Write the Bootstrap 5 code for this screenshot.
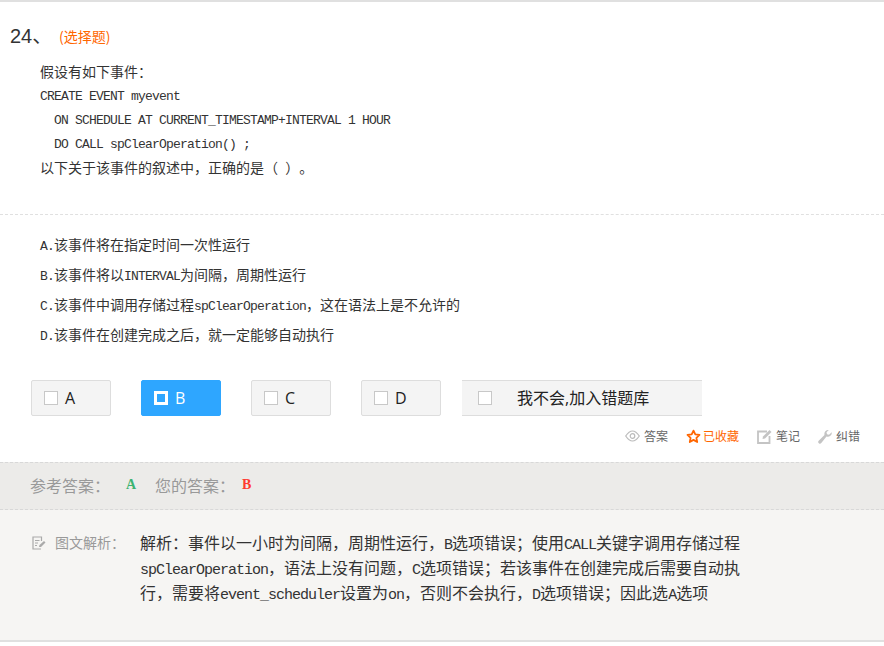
<!DOCTYPE html>
<html lang="zh-CN">
<head>
  <meta charset="UTF-8">
  <meta name="viewport" content="width=device-width, initial-scale=1">
  <title>选择题</title>
  <link href="https://cdn.jsdelivr.net/npm/bootstrap@5.3.2/dist/css/bootstrap.min.css" rel="stylesheet">
  <style>
    body {
      background: #fff;
      color: #333;
      font-family: "Noto Sans CJK SC", "Liberation Sans", sans-serif;
      font-size: 14px;
      text-spacing-trim: space-all;
    }
    .lat { font-family: "Liberation Mono", "Noto Sans CJK SC", monospace; font-size: 13px; letter-spacing: -.8px; }
    .q-box { border-top: 2px solid #e0e0e0; }
    .q-head { padding: 9px 0 0 10px; height: 59px; line-height: 24px; }
    .q-num { font-family: "Liberation Sans", "Noto Sans CJK SC", sans-serif; font-size: 20px; width: 49px; color: #333; }
    .q-type { color: #ff6600; font-size: 14px; }
    .q-body { padding: 0 0 34px 40px; border-bottom: 1px dashed #e0e0e0; line-height: 24px; height: 154px; }
    .q-body .ind { padding-left: 14px; }
    .q-body .zh { height: 24px; line-height: 20px; word-spacing: 4px; }
    .opts { padding: 14px 0 0 40px; height: 165px; }
    .opts div { height: 30px; line-height: 30px; }
    .pick-row { padding-left: 31px; gap: 30px; height: 36px; margin-bottom: 7px; }
    .pick {
      width: 80px; height: 36px; padding: 0 0 0 12px;
      background: #f4f4f4; border: 1px solid #ddd; border-radius: 2px;
      color: #222; font-size: 16px; display: flex; align-items: center; gap: 7px;
      font-family: "Open Sans", "Noto Sans CJK SC", sans-serif;
    }
    .pick:hover { background: #f4f4f4; border-color: #ddd; color: #222; }
    .tick { width: 14px; height: 14px; border: 1px solid #c8c8c8; background: #fff; flex: none; }
    .pick.on, .pick.on:hover { background: #2ea6ff; border-color: #2ea6ff; color: #fff; }
    .pick.on .tick { background: transparent; border: 3px solid #fff; }
    .pick.wide {
      width: 240px; margin-left: -9px; padding-left: 16px; gap: 25px;
      border-width: 1px 0; border-radius: 0;
    }
    .tools { height: 26px; padding-right: 24px; gap: 18px; font-size: 12px; color: #666; }
    .tools svg { display: block; flex: none; }
    .tools .it { gap: 4px; }
    .tools .fav { color: #ff6600; gap: 2px; }
    .ans-bar {
      height: 48px; margin-top: 13px; padding: 0 0 3px 30px; background: #ecebe9;
      border-top: 1px dashed #d8d8d8; border-bottom: 1px dashed #d8d8d8;
      font-size: 16px; color: #999;
    }
    .ans-bar b { font-family: "Liberation Serif", serif; font-size: 14px; font-weight: 700; }
    .ans-r { color: #3cb371; width: 29px; margin-left: 16px; }
    .ans-w { color: #ff3b30; margin-left: 7px; }
    .ana { height: 132px; background: #f6f5f3; border-bottom: 2px solid #e0e0e0; padding: 20px 0 0 31px; }
    .ana-tag { width: 109px; gap: 8px; height: 25px; color: #999; }
    .ana-txt { font-size: 16px; line-height: 25px; color: #333; }
    .ana-txt div { height: 25px; white-space: nowrap; }
    .ana-txt .lat { font-size: 15px; letter-spacing: -1px; }
  </style>
</head>
<body>

<div class="q-box">
  <!-- 题目 -->
  <div class="q-head d-flex align-items-center">
    <span class="q-num">24、</span>
    <span class="q-type">(选择题)</span>
  </div>
  <div class="q-body">
    <div class="zh">假设有如下事件：</div>
    <div class="lat">CREATE EVENT myevent</div>
    <div class="lat ind">ON SCHEDULE AT CURRENT_TIMESTAMP+INTERVAL 1 HOUR</div>
    <div class="lat ind">DO CALL spClearOperation() ;</div>
    <div class="zh">以下关于该事件的叙述中，正确的是（ ）。</div>
  </div>

  <!-- 选项 -->
  <div class="opts">
    <div><span class="lat">A.</span>该事件将在指定时间一次性运行</div>
    <div><span class="lat">B.</span>该事件将以<span class="lat">INTERVAL</span>为间隔，周期性运行</div>
    <div><span class="lat">C.</span>该事件中调用存储过程<span class="lat">spClearOperation</span>，这在语法上是不允许的</div>
    <div><span class="lat">D.</span>该事件在创建完成之后，就一定能够自动执行</div>
  </div>

  <div class="pick-row d-flex">
    <button class="btn pick"><span class="tick"></span>A</button>
    <button class="btn pick on"><span class="tick"></span>B</button>
    <button class="btn pick"><span class="tick"></span>C</button>
    <button class="btn pick"><span class="tick"></span>D</button>
    <button class="btn pick wide"><span class="tick"></span>我不会,加入错题库</button>
  </div>

  <div class="tools d-flex justify-content-end align-items-center">
    <span class="it d-flex align-items-center">
      <svg width="15" height="12" viewBox="0 0 15 12" fill="none" stroke="#bbb"><path d="M.7 6C3 2.6 5 1 7.500 1S12 2.600 14.300 6C12 9.400 10 11 7.500 11S3 9.400.7 6Z" stroke-width="1.2"/><circle cx="7.500" cy="6" r="2.300" stroke-width="1.2"/></svg>
      答案
    </span>
    <span class="it fav d-flex align-items-center">
      <svg width="15" height="15" viewBox="0 0 15 15" fill="none" stroke="#ff6600" stroke-width="1.8"><path d="M7.500 1.600 9.300 5.400l4.200.5-3.100 2.900.8 4.200-3.700-2.100-3.700 2.100.8-4.200L1.500 5.900l4.200-.5Z" stroke-linejoin="round"/></svg>
      已收藏
    </span>
    <span class="it d-flex align-items-center">
      <svg width="15" height="15" viewBox="0 0 15 15" fill="none" stroke="#c4c4c4" stroke-width="1.8"><path d="M10 2.500H1v11.500h11.500V7"/><path d="M5.500 10 6 7.500 12.500 1l2 2L8 9.500Z" fill="#c4c4c4" stroke="none"/></svg>
      笔记
    </span>
    <span class="it d-flex align-items-center">
      <svg width="14" height="15" viewBox="0 0 14 15" fill="#c4c4c4"><path d="M13.800 3.200a4 4 0 0 1-5.300 4.300L3.300 14a1.700 1.700 0 0 1-2.600-2.300L6.500 6A4 4 0 0 1 10.800 1L8.500 3.300l.5 2 2 .4Z"/></svg>
      纠错
    </span>
  </div>

  <!-- 答案 -->
  <div class="ans-bar d-flex align-items-center">
    <span>参考答案：</span><b class="ans-r">A</b>
    <span>您的答案：</span><b class="ans-w">B</b>
  </div>

  <!-- 解析 -->
  <div class="ana d-flex">
    <div class="ana-tag d-flex align-items-center">
      <svg width="16" height="16" viewBox="0 0 16 16" fill="none" stroke="#aaa" stroke-width="1.2"><path d="M10 14H2V2h8.500v4"/><path d="M4 5.500h4.500M4 8h3M4 10.500h2"/><path d="M8 12l.5-2L13 6l1.500 1.500L10 12Z" fill="#aaa" stroke="none"/></svg>
      <span>图文解析：</span>
    </div>
    <div class="ana-txt">
      <div>解析：事件以一小时为间隔，周期性运行，<span class="lat">B</span>选项错误；使用<span class="lat">CALL</span>关键字调用存储过程</div>
      <div><span class="lat">spClearOperation</span>，语法上没有问题，<span class="lat">C</span>选项错误；若该事件在创建完成后需要自动执</div>
      <div>行，需要将<span class="lat">event_scheduler</span>设置为<span class="lat">on</span>，否则不会执行，<span class="lat">D</span>选项错误；因此选<span class="lat">A</span>选项</div>
    </div>
  </div>
</div>

<script src="https://cdn.jsdelivr.net/npm/bootstrap@5.3.2/dist/js/bootstrap.bundle.min.js"></script>
</body>
</html>
